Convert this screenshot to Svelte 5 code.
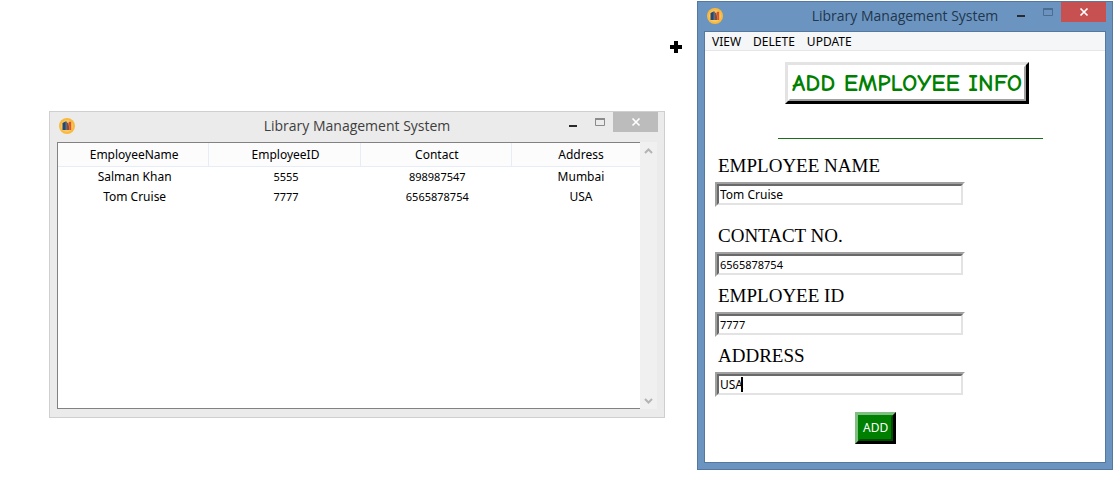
<script>
  const employees = [
    { name: 'Salman Khan', id: '5555', contact: '898987547', address: 'Mumbai' },
    { name: 'Tom Cruise', id: '7777', contact: '6565878754', address: 'USA' }
  ];
  let form = $state({ name: 'Tom Cruise', contact: '6565878754', id: '7777', address: 'USA' });
  const fields = [
    { key: 'name', label: 'EMPLOYEE NAME' },
    { key: 'contact', label: 'CONTACT NO.', numeric: true },
    { key: 'id', label: 'EMPLOYEE ID', numeric: true },
    { key: 'address', label: 'ADDRESS' }
  ];
</script>

{#snippet titlebar()}
  <header class="titlebar">
    <svg class="logo" viewBox="0 0 16 16" aria-hidden="true">
      <circle cx="8" cy="8" r="8" fill="#f9b93c" />
      <circle cx="8" cy="8" r="6" fill="#fbc964" />
      <path d="M3.500 5l2.500-1.200V12H3.500z" fill="#25486f" />
      <path d="M6 3.600h1.800V12H6z" fill="#3a5f80" />
      <path d="M7.800 5l1.500-.5L10.600 12H8z" fill="#8f4a3c" />
      <path d="M9.800 3.800h2.400v8.200h-1.700z" fill="#d9532c" />
    </svg>
    <h1>Library Management System</h1>
    <div class="controls">
      <button class="min" aria-label="Minimize">
        <svg viewBox="0 0 10 10"><path d="M1 8h8v2H1z" fill="currentColor" /></svg>
      </button>
      <button class="max" aria-label="Maximize">
        <svg viewBox="0 0 10 10"><path d="M.5 1.500h9v7h-9z" fill="none" stroke="currentColor" /><path d="M0 1h10v2H0z" fill="currentColor" /></svg>
      </button>
      <button class="close" aria-label="Close">
        <svg viewBox="0 0 10 10"><path d="M1.500 1.500l7 7M8.500 1.500l-7 7" fill="none" stroke="#fff" stroke-width="1.700" /></svg>
      </button>
    </div>
  </header>
{/snippet}

<main class="desktop">
  <section class="window list">
    {@render titlebar()}
    <div class="client">
      <div class="grid">
        <table>
          <thead>
            <tr><th>EmployeeName</th><th>EmployeeID</th><th>Contact</th><th>Address</th></tr>
          </thead>
          <tbody>
            {#each employees as e}
              <tr><td>{e.name}</td><td class="numeric">{e.id}</td><td class="numeric">{e.contact}</td><td>{e.address}</td></tr>
            {/each}
          </tbody>
        </table>
      </div>
      <div class="scrollbar">
        <button aria-label="Scroll up"><svg viewBox="0 0 9 6"><path d="M1 5l3.500-3.500L8 5" /></svg></button>
        <button aria-label="Scroll down"><svg viewBox="0 0 9 6"><path d="M1 1l3.500 3.500L8 1" /></svg></button>
      </div>
    </div>
  </section>

  <svg class="plus" viewBox="0 0 12 12" aria-hidden="true"><path d="M4 0h4v4h4v4H8v4H4V8H0V4h4z" /></svg>

  <section class="window entry">
    {@render titlebar()}
    <div class="client">
      <nav>
        <button>VIEW</button>
        <button>DELETE</button>
        <button>UPDATE</button>
      </nav>
      <form onsubmit={(ev) => ev.preventDefault()}>
        <div class="banner"><h2>ADD EMPLOYEE INFO</h2></div>
        <hr />
        {#each fields as f}
          <div class="field {f.key}">
            <label for={f.key}>{f.label}</label>
            <div class="sunken">
              <input id={f.key} class:numeric={f.numeric} type="text" bind:value={form[f.key]} />
              {#if f.key === 'address'}<span class="caret"></span>{/if}
            </div>
          </div>
        {/each}
        <button class="add" type="submit"><span>ADD</span></button>
      </form>
    </div>
  </section>
</main>

<style>
  :global(body) {
    margin: 0;
    background: #fff;
  }
  .desktop {
    display: grid;
    grid-template-columns: minmax(0, 616fr) 32px minmax(0, 416fr);
    align-items: start;
    padding: 1px 2px 24px 49px;
    font: 12px/20px "Segoe UI", "Noto Sans", sans-serif;
    color: #000;
  }
  button {
    border: 0;
    padding: 0;
    background: none;
    font: inherit;
    color: inherit;
  }
  .window {
    box-sizing: border-box;
    display: flex;
    flex-direction: column;
    padding: 0 7px 7px;
  }
  .list {
    margin-top: 110px;
    padding-bottom: 8px;
    background: #ebebeb;
    border: 1px solid #cfcfcf;
  }
  .entry {
    background: #6b95c0;
    border: 1px solid #54789f;
  }
  .titlebar {
    position: relative;
    display: flex;
    align-items: center;
    height: 28px;
    padding-bottom: 2px;
  }
  .logo {
    width: 16px;
    height: 16px;
    margin-left: 2px;
  }
  h1 {
    flex: 1;
    margin: 0 18px 0 0;
    text-align: center;
    font-size: 14px;
    line-height: 28px;
    font-weight: 400;
    font-family: "Segoe UI", "Open Sans", sans-serif;
    color: #3e3e3e;
  }
  .entry h1 {
    color: #22364d;
  }
  .controls {
    position: absolute;
    top: 0;
    right: -1px;
    display: flex;
    color: #2a2a2a;
  }
  .controls button {
    display: flex;
    align-items: center;
    justify-content: center;
    width: 27px;
    height: 20px;
  }
  .controls svg {
    width: 10px;
    height: 10px;
  }
  .controls .max {
    color: #8b8b8b;
  }
  .entry .controls .max {
    color: #4c6c90;
  }
  .controls .close {
    width: 45px;
    background: #bcbcbc;
  }
  .entry .controls .close {
    background: #c75050;
  }
  .client {
    background: #fff;
  }
  .list .client {
    display: flex;
    height: 267px;
  }
  .grid {
    flex: 1;
    border: 1px solid #828282;
    border-right: 0;
  }
  table {
    width: 100%;
    table-layout: fixed;
    border-collapse: separate;
    border-spacing: 0;
    text-align: center;
  }
  th,
  td {
    box-sizing: border-box;
    height: 20px;
    padding: 0 0 0 2px;
  }
  th {
    height: 24px;
    width: 26%;
    font-weight: 400;
    background: #fcfcfd;
    border-right: 1px solid #e6edf6;
    border-bottom: 1px solid #e6edf6;
  }
  th:last-child {
    width: auto;
    border-right: 0;
  }
  th:last-child,
  td:last-child {
    padding-left: 10px;
  }
  .numeric {
    font-size: 11px;
  }
  .scrollbar {
    display: flex;
    flex-direction: column;
    justify-content: space-between;
    width: 17px;
    background: #f0f0f0;
  }
  .scrollbar button {
    display: flex;
    align-items: center;
    justify-content: center;
    height: 17px;
  }
  .scrollbar svg {
    width: 9px;
    height: 6px;
    fill: none;
    stroke: #b4b4b4;
    stroke-width: 2;
  }
  .plus {
    width: 12px;
    height: 12px;
    margin: 40px 0 0 5px;
  }
  .entry .client {
    height: 430px;
    outline: 1px solid #54789f;
  }
  nav {
    display: flex;
    gap: 12px;
    height: 18px;
    padding: 0 7px;
    background: #f5f6f7;
    border-bottom: 1px solid #e6e6e6;
    line-height: 19px;
  }
  form {
    display: flex;
    flex-direction: column;
    align-items: flex-start;
    padding: 11px 10px 0;
  }
  .banner {
    align-self: center;
    margin-left: 4px;
    border: 3px solid;
    border-color: #e3e3e3 #000 #000 #e3e3e3;
  }
  h2 {
    margin: 0;
    width: 234px;
    border: 2px solid;
    border-color: #fff #a0a0a0 #a0a0a0 #fff;
    font: 700 24px/32px "Comic Sans MS", "Comic Neue", Lato, sans-serif;
    color: #008000;
    text-align: center;
    white-space: nowrap;
  }
  hr {
    align-self: center;
    width: 265px;
    height: 1px;
    margin: 34px 0 14px 10px;
    border: 0;
    background: #1a701a;
    flex: none;
  }
  .field {
    display: flex;
    flex-direction: column;
    width: 250px;
    height: 60px;
  }
  .field.name {
    height: 70px;
  }
  label {
    margin-left: 3px;
    height: 29px;
    font: 19px/26px "Times New Roman", "Liberation Serif", serif;
  }
  .sunken {
    position: relative;
    border: 2px solid;
    border-color: #a0a0a0 #fff #fff #a0a0a0;
  }
  input {
    display: block;
    box-sizing: border-box;
    width: 100%;
    height: 21px;
    padding: 0 1px;
    border: 2px solid;
    border-color: #696969 #e3e3e3 #e3e3e3 #696969;
    border-radius: 0;
    outline: 0;
    background: #fff;
    font: inherit;
    color: #000;
  }
  input.numeric {
    font-size: 11px;
  }
  .caret {
    position: absolute;
    left: 24px;
    top: 3px;
    width: 2px;
    height: 15px;
    background: #000;
  }
  .add {
    margin: 9px 0 0 140px;
    border: 3px solid;
    border-color: #7fbf7f #000 #000 #7fbf7f;
    background: #008000;
    color: #fff;
  }
  .add span {
    display: block;
    padding: 1px 3px;
    border: 2px solid;
    border-color: #008000 #004d00 #004d00 #008000;
  }
</style>
